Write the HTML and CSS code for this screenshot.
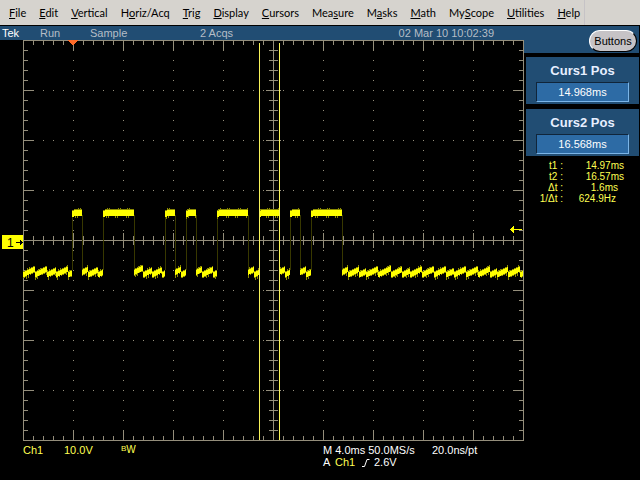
FILE: index.html
```html
<!DOCTYPE html>
<html lang="en">
<head>
  <meta charset="UTF-8">
  <meta name="viewport" content="width=device-width, initial-scale=1.0">
  <title>Tek Scope</title>
  <link rel="stylesheet" href="styles.css">
</head>
<body>
  <nav class="menubar">
    <button><u>F</u>ile</button>
    <button><u>E</u>dit</button>
    <button><u>V</u>ertical</button>
    <button>H<u>o</u>riz/Acq</button>
    <button><u>T</u>rig</button>
    <button><u>D</u>isplay</button>
    <button><u>C</u>ursors</button>
    <button>Mea<u>s</u>ure</button>
    <button>M<u>a</u>sks</button>
    <button><u>M</u>ath</button>
    <button>My<u>S</u>cope</button>
    <button><u>U</u>tilities</button>
    <button class="last"><u>H</u>elp</button>
  </nav>
  <div class="scope">
    <main class="display">
      <div class="status">
        <span class="brand">Tek</span>
        <span class="run">Run</span>
        <span class="mode">Sample</span>
        <span class="acqs">2 Acqs</span>
        <span class="date">02 Mar 10 10:02:39</span>
      </div>
      <svg class="screen" id="screen" viewBox="0 0 524 401" shape-rendering="crispEdges"></svg>
      <div class="readout">
        <div class="channel">
          <span class="ch">Ch1</span>
          <span class="scale">10.0V</span>
          <span class="bw"><span class="b">B</span><span>W</span></span>
        </div>
        <div class="timebase">
          <div><span class="rate">M 4.0ms 50.0MS/s</span><span>20.0ns/pt</span></div>
          <div class="trigger">
            <span>A</span>
            <span class="ch">Ch1</span>
            <svg width="8" height="9" viewBox="0 0 8 9"><path d="M0 8.500h2.500L5 1.500h2.500" /></svg>
            <span>2.6V</span>
          </div>
        </div>
      </div>
    </main>
    <aside class="side">
      <div class="top"><button class="buttons">Buttons</button></div>
      <div class="panel">
        <label for="curs1">Curs1 Pos</label>
        <input type="text" id="curs1" value="14.968ms">
      </div>
      <div class="panel">
        <label for="curs2">Curs2 Pos</label>
        <input type="text" id="curs2" value="16.568ms">
      </div>
      <dl class="measure">
        <dt>t1 :</dt><dd>14.97ms</dd>
        <dt>t2 :</dt><dd>16.57ms</dd>
        <dt>Δt :</dt><dd class="short">1.6ms</dd>
        <dt>1/Δt :</dt><dd class="hz">624.9Hz</dd>
      </dl>
    </aside>
  </div>
  <script src="scope.js"></script>
</body>
</html>
```

FILE: styles.css
```css
* {
  box-sizing: border-box;
}
body {
  margin: 0;
  background: #000;
  color: #fff;
  font-family: "Liberation Sans", Arial, sans-serif;
  font-size: 11px;
}
button {
  border: none;
  background: none;
  padding: 0;
  color: #000;
  white-space: nowrap;
}
.menubar {
  display: flex;
  gap: 13px;
  height: 25px;
  padding: 0 9px;
  background: #d6d3ce;
}
.menubar button {
  font: 11px/24px Lato, sans-serif;
}
.menubar .last {
  padding-right: 4px;
  border-right: 1px solid #c6c3c6;
}
.scope {
  display: flex;
  margin-top: 1px;
  padding-right: 1px;
}
.display {
  flex: 524 1 0;
}
.side {
  flex: 115 1 0;
}
.status {
  display: flex;
  height: 14px;
  padding-left: 2px;
  background: #214d73;
  color: #b5bdc6;
  line-height: 14px;
}
.brand {
  width: 38px;
  color: #fff;
}
.run {
  width: 50px;
}
.mode {
  width: 110px;
}
.date {
  margin-left: auto;
  padding-right: 30px;
}
.screen {
  display: block;
  width: 100%;
}
.grid {
  fill: none;
  stroke: #948e7b;
}
.trace {
  fill: #ffff00;
}
.noise {
  fill: #8c8c00;
}
.edge {
  fill: #383800;
}
.cursor {
  fill: #f7f35a;
}
.tag-text {
  fill: #000;
  font-size: 12px;
}
.readout {
  display: flex;
  padding: 3px 0 0 23px;
  line-height: 12px;
}
.channel {
  display: flex;
  width: 300px;
  color: #ffff52;
}
.ch {
  width: 41px;
  color: #ffff52;
}
.scale {
  width: 57px;
}
.bw {
  display: flex;
  font-size: 10px;
}
.bw .b {
  font-size: 8px;
  line-height: 10px;
}
.rate {
  display: inline-block;
  width: 109px;
}
.trigger {
  display: flex;
}
.trigger span:first-child {
  width: 12px;
}
.trigger .ch {
  width: 27px;
}
.trigger svg {
  width: 8px;
  margin: 2px 4px 0 0;
  fill: none;
  stroke: #fff;
}
.top {
  height: 27px;
  padding: 4px 2px 0 0;
  background: #214d73;
  text-align: right;
}
.buttons {
  width: 48px;
  height: 22px;
  border: 1px solid #000;
  border-top-color: #fff;
  border-left-color: #fff;
  border-radius: 12px;
  background: #c6c3c6;
  font: 11px "Liberation Sans", sans-serif;
}
.panel {
  height: 47px;
  margin: 4px 0 5px 2px;
  padding: 5px 10px 0;
  background: #214d73;
}
.panel label {
  display: block;
  color: #e7efff;
  font: bold 13px/17px "Liberation Sans", sans-serif;
  text-align: center;
}
.panel input {
  display: block;
  width: 100%;
  height: 20px;
  margin-top: 3px;
  padding: 0;
  border: 1px solid #7bb5e7;
  border-top-color: #10253a;
  border-left-color: #10253a;
  background: #2d6ba5;
  color: #fff;
  font: 11px "Liberation Sans", sans-serif;
  text-align: center;
}
.measure {
  display: grid;
  grid-template-columns: 39px 1fr;
  margin: 0 15px 0 0;
  color: #ffff52;
  font-size: 10px;
  line-height: 11px;
  text-align: right;
}
.measure dd {
  margin: 0;
}
.measure .short {
  padding-right: 6px;
}
.measure .hz {
  padding-right: 8px;
}
.panel:has(+ .measure) {
  margin-bottom: 4px;
}
```

FILE: scope.js
```js
const screen_ = document.getElementById("screen");
const LEFT = 23, RIGHT = 523, BOTTOM = 400;
const CX = 273, CY = 200;

const rect = (cls, x, y, w, h) =>
  `<rect class="${cls}" x="${x}" y="${y}" width="${w}" height="${h}"/>`;

// frame, axes, ticks and dots, 10 x 8 divisions of 50
function graticule() {
  let d = `M23.5 .5H523.500V400.500H23.500ZM${LEFT} ${CY + 0.5}H${RIGHT}M${CX + 0.5} 0V${BOTTOM}`;
  for (let x = LEFT + 10; x < RIGHT; x += 10) {
    const major = (x - LEFT) % 50 === 0;
    const n = major ? 10 : 4;
    d += `M${x + 0.5} 0v${n + 1}M${x + 0.5} ${BOTTOM}v${-n}`;
    d += `M${x + 0.5} ${CY - (major ? 7 : 4)}v${major ? 15 : 9}`;
  }
  for (let y = 10; y < BOTTOM; y += 10) {
    const major = y % 50 === 0;
    const n = major ? 10 : 4;
    d += `M${LEFT} ${y + 0.5}h${n + 1}M${RIGHT} ${y + 0.5}h${-n}`;
    d += `M${CX - (major ? 7 : 4)} ${y + 0.5}h${major ? 15 : 9}`;
  }
  for (let x = LEFT + 10; x < RIGHT; x += 10) {
    for (let y = 10; y < BOTTOM; y += 10) {
      if (x % 50 === 23 || y % 50 === 0) d += `M${x} ${y + 0.5}h1`;
    }
  }
  return `<path class="grid" d="${d}"/>`;
}

// x positions where the signal toggles, starting low
const edges = [23, 72, 82, 103, 134, 165, 175, 186, 196, 217, 248, 259, 279, 290, 300, 311, 342, 523];

// ripple on the low level drops back at these x positions
const drops = [23, 35, 47, 56, 68, 88, 98, 143, 152, 162, 181, 202, 213, 254, 285, 306,
  348, 359, 366, 378, 391, 402, 410, 422, 434, 446, 454, 466, 478, 490, 497, 508, 520];

function trace() {
  let out = "";
  for (let i = 0; i < edges.length - 1; i++) {
    const a = edges[i], b = edges[i + 1];
    const high = i % 2 === 1;
    if (i > 0) out += rect("edge", a, 175, 1, 55);
    let phase = 5;
    for (let x = a; x < b; x++) {
      if (drops.includes(x)) phase = 0;
      const y = high ? 170 + (x < a + 2 ? 1 : 0) : 232 - Math.floor(phase / 2);
      const dim = (x * 7 + (x >> 2)) % 5;
      out += rect("noise", x, y - (dim === 0 ? 2 : 1), 1, dim === 3 ? 9 : 7);
      out += rect("trace", x, y, 1, high ? 6 : 5);
      phase++;
    }
  }
  return out;
}

screen_.innerHTML =
  graticule() +
  trace() +
  rect("cursor", 259, 3, 1, 397) +
  rect("cursor", 279, 3, 1, 397) +
  `<path fill="#ff6b29" d="M68 0h10l-5 6Z"/>` +
  rect("trace", 2, 195, 21, 14) +
  `<text class="tag-text" x="7" y="207">1</text>` +
  `<path fill="#000" d="M16 202h4v-2l3 2.500l-3 2.500v-2h-4Z"/>` +
  `<path fill="#ffff00" d="M522 189v1h-8v3l-4 -3.500l4 -3.500v3Z"/>`;
```
